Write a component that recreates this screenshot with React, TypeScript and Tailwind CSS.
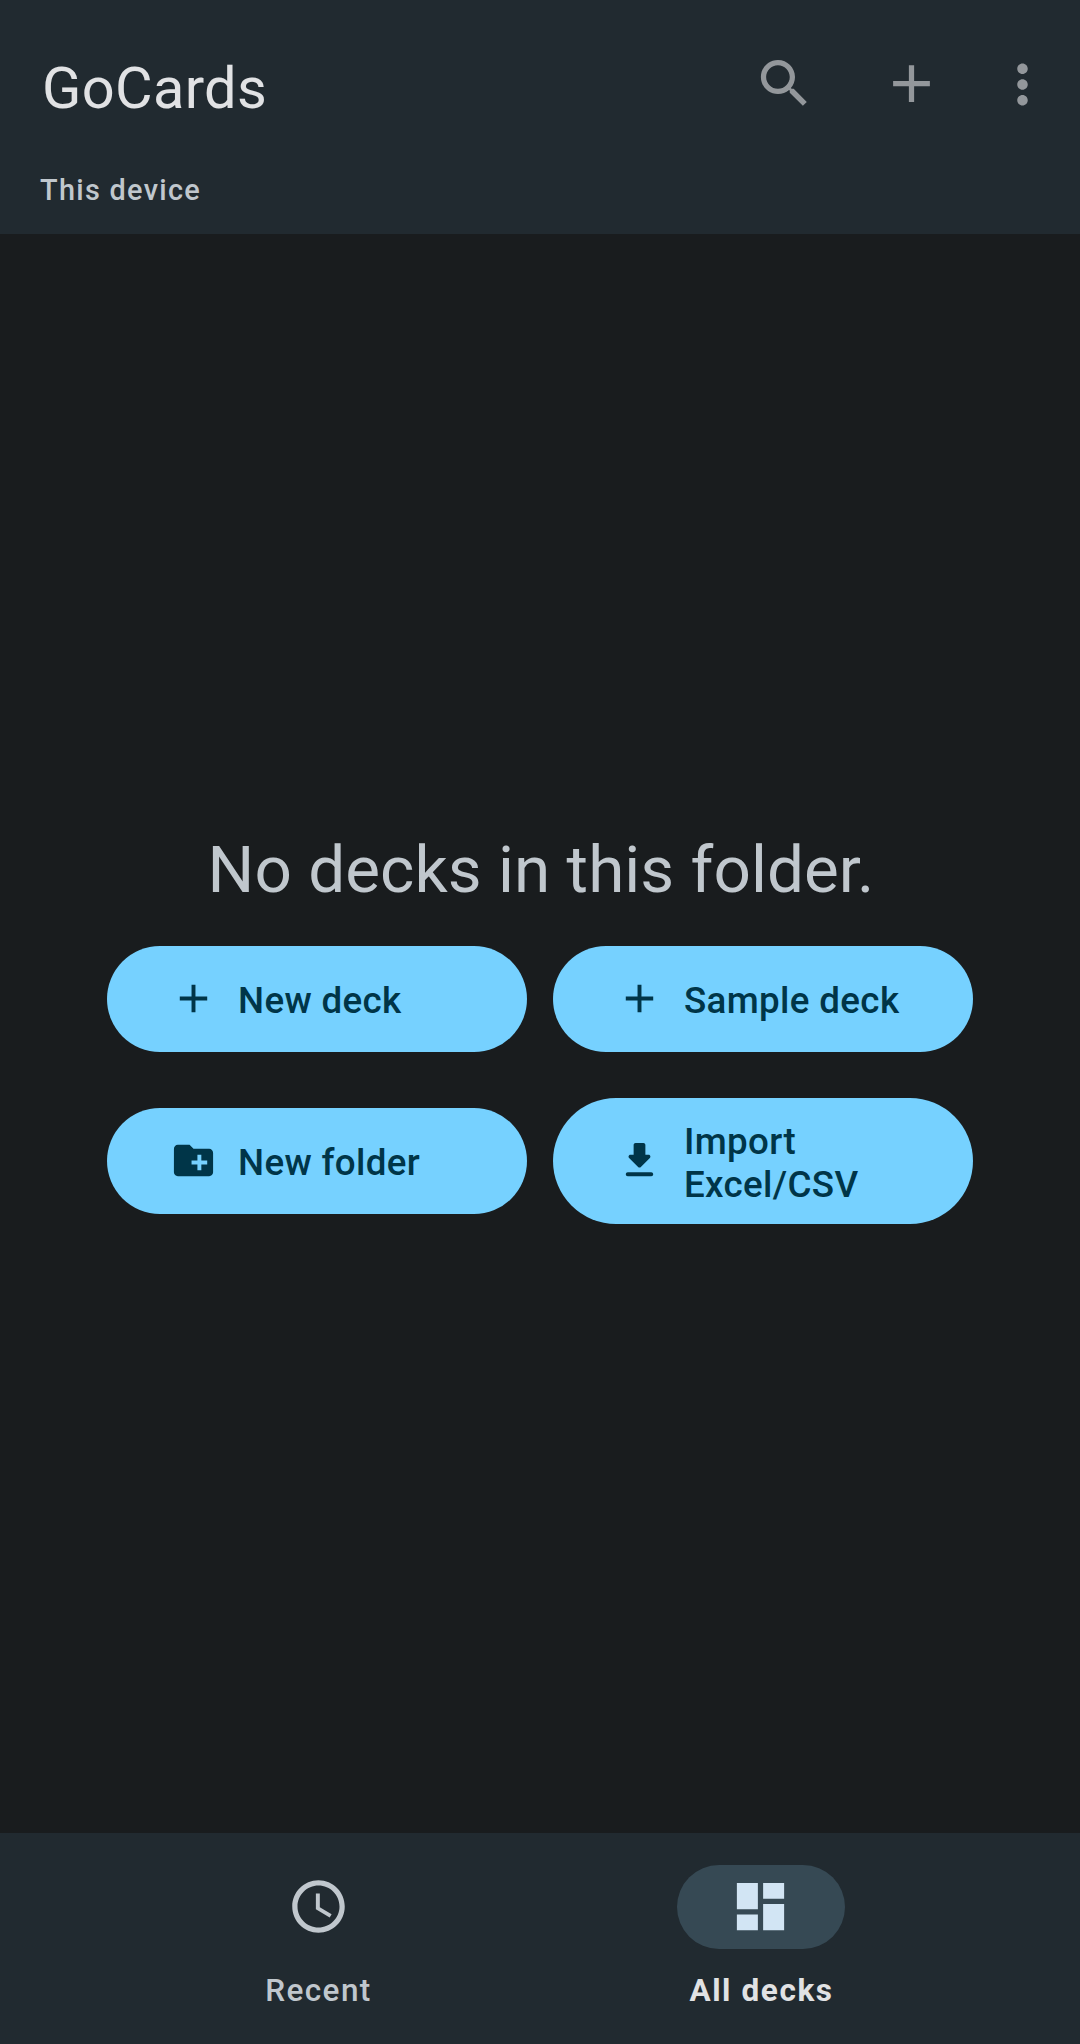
import React from "react";

type IconProps = { className?: string; d: string };

const Icon = ({ className, d }: IconProps) => (
  <svg viewBox="0 0 24 24" fill="currentColor" className={className} aria-hidden="true">
    <path d={d} />
  </svg>
);

const icons = {
  search:
    "M15.5 14h-.79l-.28-.27C15.41 12.59 16 11.11 16 9.5 16 5.91 13.09 3 9.5 3S3 5.91 3 9.5 5.91 16 9.5 16c1.61 0 3.09-.59 4.23-1.57l.27.28v.79l5 4.99L20.49 19l-4.99-5zm-6 0C7.01 14 5 11.99 5 9.5S7.01 5 9.5 5 14 7.01 14 9.5 11.99 14 9.5 14z",
  plus: "M19 13h-6v6h-2v-6H5v-2h6V5h2v6h6v2z",
  more: "M12 8c1.1 0 2-.9 2-2s-.9-2-2-2-2 .9-2 2 .9 2 2 2zm0 2c-1.1 0-2 .9-2 2s.9 2 2 2 2-.9 2-2-.9-2-2-2zm0 6c-1.1 0-2 .9-2 2s.9 2 2 2 2-.9 2-2-.9-2-2-2z",
  folder:
    "M20 6h-8l-2-2H4c-1.11 0-1.99.89-1.99 2L2 18c0 1.11.89 2 2 2h16c1.11 0 2-.89 2-2V8c0-1.11-.89-2-2-2zm-1 8h-3v3h-2v-3h-3v-2h3V9h2v3h3v2z",
  download:
    "M16.59 9H15V4c0-.55-.45-1-1-1h-4c-.55 0-1 .45-1 1v5H7.41c-.89 0-1.34 1.08-.71 1.71l4.59 4.59c.39.39 1.02.39 1.41 0l4.59-4.59c.63-.63.19-1.71-.7-1.71zM5 19c0 .55.45 1 1 1h12c.55 0 1-.45 1-1s-.45-1-1-1H6c-.55 0-1 .45-1 1z",
  clock:
    "M11.99 2C6.47 2 2 6.48 2 12s4.47 10 9.99 10C17.52 22 22 17.52 22 12S17.52 2 11.99 2zM12 20c-4.42 0-8-3.58-8-8s3.58-8 8-8 8 3.58 8 8-3.58 8-8 8zm.5-13H11v6l5.25 3.15.75-1.23-4.5-2.67z",
  dashboard: "M3 13h8V3H3v10zm0 8h8v-6H3v6zm10 0h8V11h-8v10zm0-18v6h8V3h-8z",
};

type ActionProps = { icon: string; tall?: boolean; children: React.ReactNode };

const Action = ({ icon, tall, children }: ActionProps) => (
  <button
    className={`flex w-[420px] items-center gap-[21px] rounded-full bg-[#76d1ff] px-[63px] text-left text-[36.75px] leading-[43px] font-medium tracking-[0.34px] text-[#003548] ${
      tall ? "h-[126px]" : "h-[106px]"
    }`}
  >
    <Icon d={icon} className="mb-[2px] size-[47px] shrink-0" />
    <span className={tall ? "mt-[3px] whitespace-nowrap" : "mt-[2px] whitespace-nowrap"}>{children}</span>
  </button>
);

export default function App() {
  return (
    <div className="flex h-[2044px] w-[1080px] flex-col bg-[#191c1e] font-['Roboto',sans-serif]">
      <header className="h-[234px] shrink-0 bg-[#212a30]">
        <div className="flex h-[147px] items-start pt-[52px] pr-[26px] pl-[42px]">
          <h1 className="mt-[2px] text-[57.75px] leading-[68px] tracking-[0.35px] text-[#e1e2e4]">GoCards</h1>
          <div className="ml-auto flex items-start text-[#93979b]">
            <button className="mr-16"><Icon d={icons.search} className="size-[63px]" /></button>
            <button className="mr-12"><Icon d={icons.plus} className="size-[63px]" /></button>
            <button className="mt-px"><Icon d={icons.more} className="size-[63px]" /></button>
          </div>
        </div>
        <p className="pt-[26px] pl-10 text-[28.875px] leading-[34px] font-medium tracking-[1.3px] text-[#c0c7cd]">
          This device
        </p>
      </header>

      <main className="flex flex-1 flex-col items-center pt-[597px]">
        <h2 className="pl-[2px] text-[65.625px] leading-[77px] tracking-[0.05px] text-[#c0c7cd]">No decks in this folder.</h2>
        <div className="mt-[38px] grid grid-cols-2 gap-x-[26px]">
          <Action icon={icons.plus}>New deck</Action>
          <Action icon={icons.plus}>Sample deck</Action>
        </div>
        <div className="mt-[46px] grid grid-cols-2 items-center gap-x-[26px]">
          <Action icon={icons.folder}>New folder</Action>
          <Action icon={icons.download} tall>
            Import
            <br />
            Excel/CSV
          </Action>
        </div>
      </main>

      <nav className="flex h-[211px] shrink-0 justify-center bg-[#212a30] pt-8 text-[31.5px] leading-[37px]">
        <button className="flex w-[442px] flex-col items-center gap-[23px] font-medium text-[#c0c7cd]">
          <span className="flex h-[84px] w-[168px] items-center justify-center pr-px pb-px">
            <Icon d={icons.clock} className="size-[63px]" />
          </span>
          <span className="pr-px tracking-[1.4px]">Recent</span>
        </button>
        <button className="flex w-[442px] flex-col items-center gap-[23px] font-bold text-[#e1e2e4]">
          <span className="flex h-[84px] w-[168px] items-center justify-center rounded-full bg-[#364954] pr-px pb-px text-[#d2e5f4]">
            <Icon d={icons.dashboard} className="size-[63px]" />
          </span>
          <span className="pl-px tracking-[1.6px]">All decks</span>
        </button>
      </nav>
    </div>
  );
}
